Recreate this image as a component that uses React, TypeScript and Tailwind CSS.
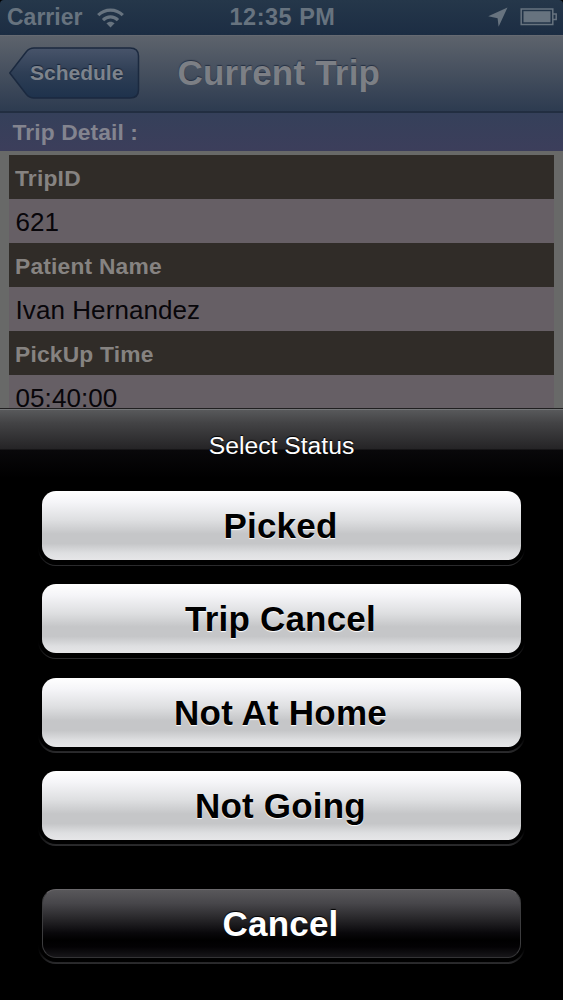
import { clsx } from 'clsx';

interface Field {
  label: string;
  value: string;
}

const fields: Field[] = [
  { label: 'TripID', value: '621' },
  { label: 'Patient Name', value: 'Ivan Hernandez' },
  { label: 'PickUp Time', value: '05:40:00' },
];

const statuses = ['Picked', 'Trip Cancel', 'Not At Home', 'Not Going'];

function StatusBar() {
  return (
    <div className="grid h-[35px] grid-cols-3 items-center rounded-t-[4px] bg-linear-to-b from-[#25374a] to-[#1c2d43] text-[23px] font-bold text-[#67737f]">
      <div className="flex items-center gap-[15px] pl-[7px]">
        <span className="leading-none">Carrier</span>
        <svg width="27" height="20" viewBox="0 0 27 20" fill="none" stroke="currentColor" strokeWidth="3.2">
          <path d="M1.2 7.2C8 .4 19 .4 25.8 7.2" />
          <path d="M6 12.1C10.3 7.9 16.7 7.9 21 12.1" />
          <path d="M13.5 19.4 9.4 15.3C11.7 13.1 15.3 13.1 17.6 15.3Z" fill="currentColor" stroke="none" />
        </svg>
      </div>
      <span className="pl-[2px] text-center text-[23.5px] leading-none tracking-[0.5px] whitespace-nowrap">12:35 PM</span>
      <div className="flex items-center justify-end gap-[12px] pr-[5px] pb-[2px]">
        <svg width="20" height="20" viewBox="0 0 20 20" fill="currentColor">
          <path d="M19.5.5 10.6 19.8 9.6 11.2 .2 9.2Z" />
        </svg>
        <svg width="38" height="18" viewBox="0 0 38 18" fill="currentColor">
          <path fill="none" stroke="currentColor" strokeWidth="1.5" d="M1.2 1H32.8V16.5H1.2ZM33 6H36.2V11.5H33" />
          <path d="M3.5 3.2H30.5V14.3H3.5Z" />
        </svg>
      </div>
    </div>
  );
}

function NavBar() {
  return (
    <div className="flex h-[78px] items-center border-t border-b-2 border-t-[#666a72] border-b-[#222e41] bg-linear-to-b from-[#5d636c] via-[#454f5e] to-[#2d3b50] pb-[3px]">
      <div className="relative ml-[9px] flex h-[52px] w-[131px] items-center">
        <svg className="absolute inset-0 top-px" width="131" height="52" viewBox="0 0 131 52">
          <defs>
            <linearGradient id="back" x1="0" y1="0" x2="0" y2="1">
              <stop offset="0" stopColor="#48546a" />
              <stop offset="0.5" stopColor="#2e3e55" />
              <stop offset="1" stopColor="#1e324c" />
            </linearGradient>
          </defs>
          <path
            d="M.8 26 17.5 4.5Q20.5 1 25 1H121Q129.5 1 129.5 9V43Q129.5 51 121 51H25Q20.5 51 17.5 47.5Z"
            fill="url(#back)"
            stroke="#1b293f"
            strokeWidth="1.5"
          />
        </svg>
        <span className="relative pl-[21px] text-[21px] leading-none font-bold text-[#7d838c] [text-shadow:0_-1px_1px_#172337]">
          Schedule
        </span>
      </div>
      <h1 className="mt-px ml-[37.5px] text-[35px] leading-none font-bold tracking-[0.2px] whitespace-nowrap text-[#7c7f85] [text-shadow:0_-1px_1px_#253043]">
        Current Trip
      </h1>
    </div>
  );
}

function TripDetail() {
  return (
    <>
      <h2 className="h-[38px] bg-linear-to-b from-[#35405a] to-[#3c3e5b] pl-[12.5px] text-[22.8px] leading-[38px] font-bold tracking-[0.1px] text-[#83848f]">
        Trip Detail :
      </h2>
      <dl className="bg-[#686968] px-[9px] pt-[4px]">
        {fields.map((field) => (
          <div key={field.label}>
            <dt className="h-[44px] bg-[#302c28] pl-[6px] text-[22.8px] leading-[46px] font-bold tracking-[0.2px] text-[#868381]">
              {field.label}
            </dt>
            <dd className="h-[44px] bg-[#665f65] pl-[6.5px] text-[26px] leading-[46px] tracking-[0.08px] text-[#08060a]">
              {field.value}
            </dd>
          </div>
        ))}
      </dl>
    </>
  );
}

function SheetButton({ label, dark = false }: { label: string; dark?: boolean }) {
  return (
    <div className="mx-[38px] h-[75px] rounded-[18px] bg-linear-to-b from-black from-70% to-[#2c2c2e] px-px pb-[1.5px]">
      <div className="h-full rounded-[17px] bg-black px-[3px]">
        <button
          className={clsx(
            'block h-[69px] w-full rounded-[14px] pr-[2px] text-[35px] font-bold tracking-[0.2px]',
            dark
              ? 'border border-t-[#6a686b] border-r-[#3c3c3e] border-b-[#343436] border-l-[#3c3c3e] bg-[linear-gradient(#59585b,#47464a_20%,#29282b_42%,#09080b_64%,#000_75%,#030204_85%,#171619)] leading-[67px] text-white [text-shadow:0_-1px_1px_#000]'
              : 'bg-[linear-gradient(#fff,#f5f5f8_16%,#dedfe1_42%,#c5c6c8_62%,#c5c6c8_76%,#dedfe1_90%,#e6e6e8)] leading-[70px] text-black [text-shadow:0_1px_1px_#fff]',
          )}
        >
          {label}
        </button>
      </div>
    </div>
  );
}

function ActionSheet() {
  return (
    <div className="absolute inset-x-0 top-[408px] bottom-0 border-t border-[#201f20] bg-black">
      <div className="h-[82px] border-t border-[#747678] bg-[linear-gradient(#58595b,#434345_13px,#252426_39px,#09080a_40px,#000_68px)] pt-[21px] text-center text-[24.7px] leading-[30px] text-white [text-shadow:0_-1px_1px_#000]">
        Select Status
      </div>
      <div className="flex flex-col gap-[18.3px]">
        {statuses.map((status) => (
          <SheetButton key={status} label={status} />
        ))}
      </div>
      <div className="mt-[43px]">
        <SheetButton label="Cancel" dark />
      </div>
    </div>
  );
}

export default function App() {
  return (
    <div className="relative h-[1000px] w-[563px] overflow-hidden bg-black font-['Liberation_Sans',Arial,sans-serif]">
      <StatusBar />
      <NavBar />
      <TripDetail />
      <ActionSheet />
    </div>
  );
}
